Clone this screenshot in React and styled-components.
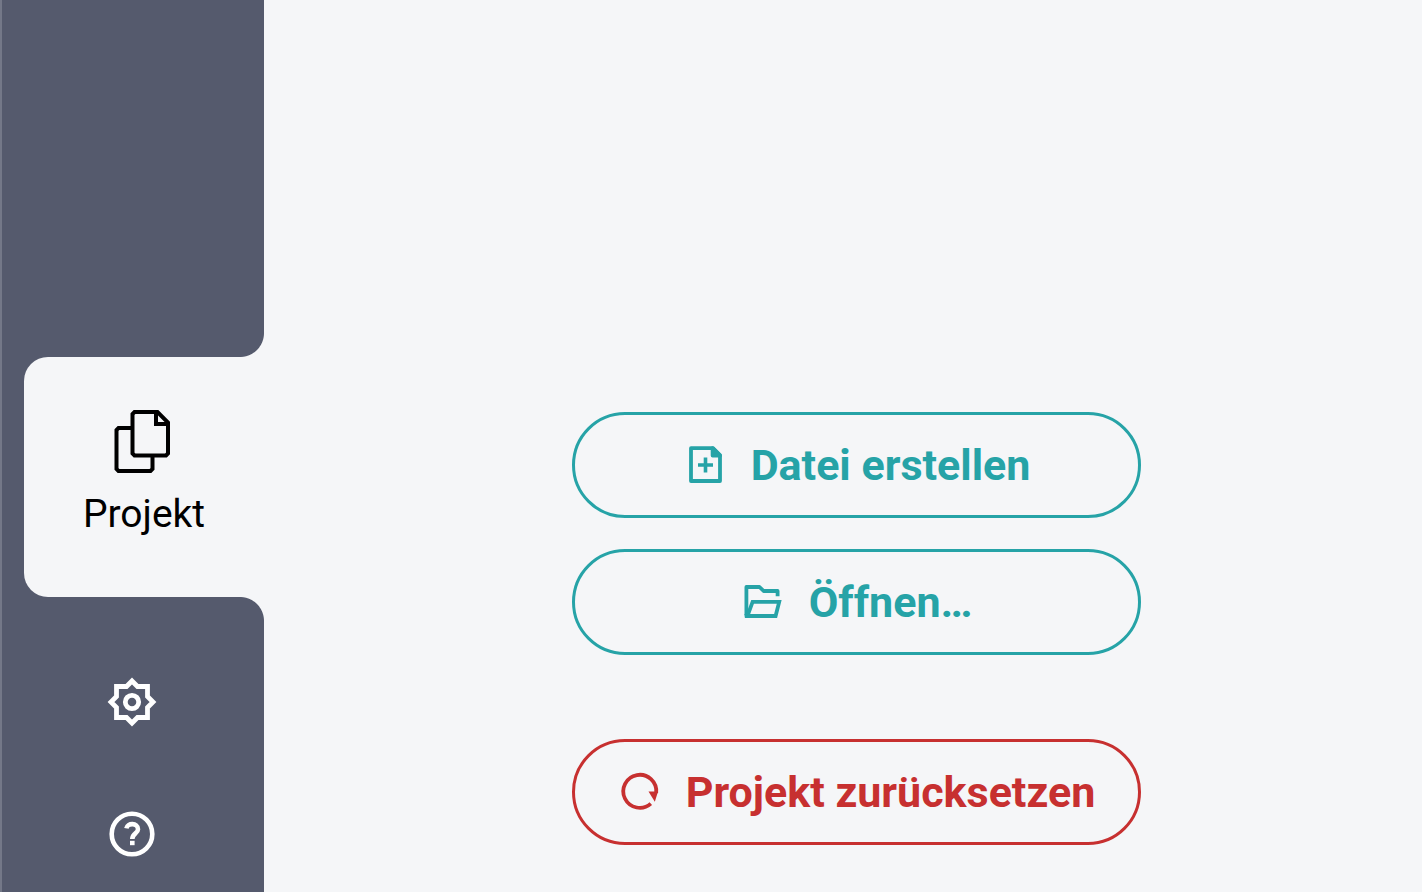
import React, { useState } from "react";
import styled, { createGlobalStyle } from "styled-components";

const colors = {
    dark: "#555a6d",
    edge: "#747888",
    light: "#f5f6f8",
    teal: "#26a3a7",
    red: "#c73030",
};

const FilesIcon = () => (
    <svg width="64" height="64" viewBox="0 0 64 64" fill="none" stroke="currentColor" strokeWidth="4" aria-hidden="true">
        <path d="M22.5 2H45.5L56 12.5V43.5L54 45.5H22.5L20.5 43.5V4Z" />
        <path d="M44 2V14H56" />
        <path d="M20.5 18H6.5L4.5 20V59L6.5 61H38.5L40.5 59V45.5" />
    </svg>
);

const GearIcon = () => (
    <svg width="52" height="52" viewBox="-26 -26 52 52" fill="none" stroke="currentColor" strokeWidth="4.8" aria-hidden="true">
        <path d="M0-21L5.5-15.5H15.5V-5.5L21 0L15.5 5.5V15.5H5.5L0 21L-5.5 15.5H-15.5V5.5L-21 0L-15.5-5.5V-15.5H-5.5Z" />
        <circle r="6.7" />
    </svg>
);

const HelpIcon = () => (
    <svg width="52" height="52" viewBox="-26 -26 52 52" fill="none" stroke="currentColor" strokeWidth="4.6" aria-hidden="true">
        <circle r="20.3" />
        <path d="M-5.6-5.6C-4.8-11.4 6-11.4 6-4.8C6-.8 .3-.6 .3 5" />
        <path d="M.3 6.8V11.2" />
    </svg>
);

const NewFileIcon = () => (
    <svg width="44" height="44" viewBox="0 0 44 44" fill="none" stroke="currentColor" strokeWidth="3.8" strokeLinejoin="round" aria-hidden="true">
        <path d="M8 5.2H30L37 12.2V38H8Z" />
        <path d="M29.6 5.2V12.6H37Z" fill="currentColor" />
        <path d="M22.5 14.5V29.5M15 22H30" strokeWidth="3.6" />
    </svg>
);

const FolderIcon = () => (
    <svg width="44" height="44" viewBox="0 0 44 44" fill="none" stroke="currentColor" strokeWidth="3.8" aria-hidden="true">
        <path d="M5.4 35V7H18.5L22.6 11H36.6V16.2" strokeLinejoin="round" />
        <path d="M11.6 21.9H38.2L34.6 36H6.4Z" />
        <path d="M5.4 34V36H9" strokeLinejoin="round" />
    </svg>
);

const ResetIcon = () => (
    <svg width="44" height="44" viewBox="0 0 44 44" fill="none" stroke="currentColor" strokeWidth="3.8" aria-hidden="true">
        <path d="M38.2 23A16.5 16.5 0 1 0 32.8 33.6" />
        <path d="M30.5 21.6L40 21.6L36.8 31.8Z" fill="currentColor" stroke="none" />
    </svg>
);

const menu = [
    { id: "settings", label: "Einstellungen", icon: <GearIcon /> },
    { id: "help", label: "Hilfe", icon: <HelpIcon /> },
];

export default function App() {
    let [active, setActive] = useState("project");

    return (
        <Shell>
            <GlobalStyle />
            <Sidebar>
                <ProjectTab
                    aria-current={active === "project" ? "page" : undefined}
                    onClick={() => setActive("project")}
                >
                    <FilesIcon />
                    <TabLabel>Projekt</TabLabel>
                </ProjectTab>
                {menu.map((item) => (
                    <MenuButton
                        key={item.id}
                        aria-label={item.label}
                        onClick={() => setActive(item.id)}
                    >
                        {item.icon}
                    </MenuButton>
                ))}
            </Sidebar>
            <Content>
                <Actions>
                    <ActionButton $color={colors.teal}>
                        <NewFileIcon />
                        Datei erstellen
                    </ActionButton>
                    <ActionButton $color={colors.teal}>
                        <FolderIcon />
                        Öffnen…
                    </ActionButton>
                </Actions>
                <Actions>
                    <ActionButton $color={colors.red}>
                        <ResetIcon />
                        Projekt zurücksetzen
                    </ActionButton>
                </Actions>
            </Content>
        </Shell>
    );
}

const GlobalStyle = createGlobalStyle`
    * {
        box-sizing: border-box;
    }
    body {
        margin: 0;
        background: ${colors.light};
        font-family: Roboto, "Liberation Sans", sans-serif;
    }
    button {
        font-family: inherit;
        border: none;
        background: none;
        padding: 0;
        cursor: pointer;
    }
`;
const Shell = styled.div`
    display: flex;
    min-height: 100vh;
`;
const Sidebar = styled.nav`
    flex: 0 0 264px;
    display: flex;
    flex-direction: column;
    justify-content: flex-end;
    gap: 24px;
    padding: 24px 0 4px 22px;
    border-left: 2px solid ${colors.edge};
    background: ${colors.dark};
`;
const ProjectTab = styled.button`
    position: relative;
    display: flex;
    flex-direction: column;
    align-items: center;
    justify-content: center;
    gap: 16px;
    height: 240px;
    margin-bottom: 27px;
    padding-bottom: 6px;
    border-radius: 24px 0 0 24px;
    background: ${colors.light};
    color: #000;

    /* rounded transitions into the sidebar */
    &::before,
    &::after {
        content: "";
        position: absolute;
        right: 0;
        width: 24px;
        height: 24px;
    }
    &::before {
        bottom: 100%;
        background: radial-gradient(circle at 0 0, ${colors.dark} 23.5px, ${colors.light} 24.5px);
    }
    &::after {
        top: 100%;
        background: radial-gradient(circle at 0 100%, ${colors.dark} 23.5px, ${colors.light} 24.5px);
    }
`;
const TabLabel = styled.span`
    font-size: 39px;
    line-height: 48px;
`;
const MenuButton = styled.button`
    display: flex;
    align-items: center;
    justify-content: center;
    height: 108px;
    margin-right: 24px;
    color: #fff;
`;
const Content = styled.main`
    flex: 1;
    display: flex;
    flex-direction: column;
    align-items: center;
    justify-content: flex-end;
    gap: 84px;
    padding: 24px 0 47px 27px;
`;
const Actions = styled.div`
    display: flex;
    flex-direction: column;
    gap: 31px;
    width: 569px;
    max-width: 100%;
`;
const ActionButton = styled.button`
    && {
        border: 3px solid ${(props) => props.$color};
    }
    display: flex;
    align-items: center;
    justify-content: center;
    gap: 24px;
    height: 106px;
    border-radius: 53px;
    color: ${(props) => props.$color};
    font-size: 43px;
    font-weight: 700;
    white-space: nowrap;
`;
